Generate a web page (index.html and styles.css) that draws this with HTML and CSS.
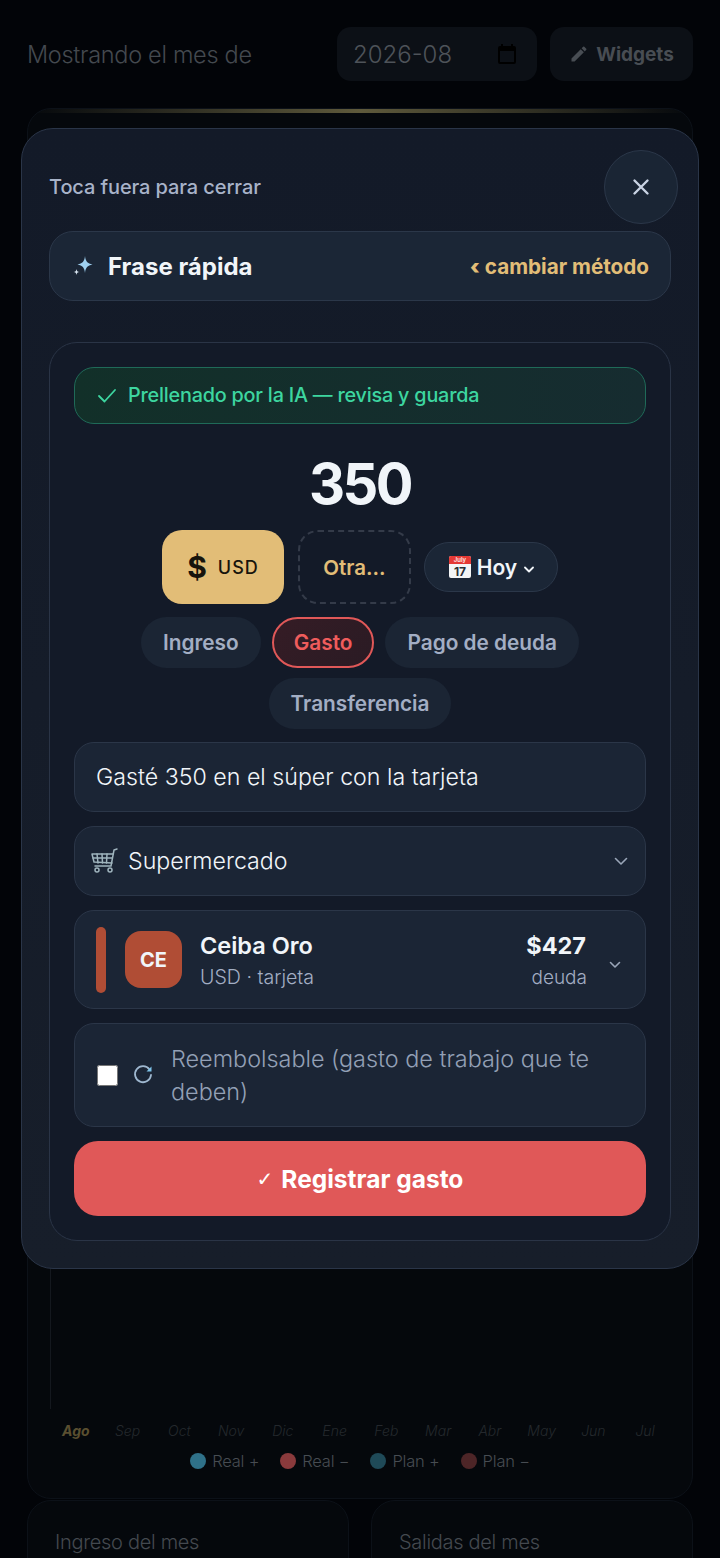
FILE: index.html
```html
<!DOCTYPE html>
<html lang="es">
<head>
    <meta charset="UTF-8">
    <meta name="viewport" content="width=device-width, initial-scale=1.0">
    <title>Registrar gasto</title>
    <link rel="stylesheet" href="styles.css">
</head>
<body>
<div class="page">
    <div class="top-bar">
        <span class="top-label">Mostrando el mes de</span>
        <div class="month-field">
            <span>2026-08</span>
            <svg width="24" height="24" viewBox="0 0 24 24" fill="#000"><path d="M19 4h-1V2h-2v2H8V2H6v2H5a2 2 0 0 0-2 2v14a2 2 0 0 0 2 2h14a2 2 0 0 0 2-2V6a2 2 0 0 0-2-2zm0 16H5V9h14v11z"/></svg>
        </div>
        <div class="widgets-btn">
            <svg width="20" height="20" viewBox="0 0 24 24" fill="#484d53"><path d="M3 17.25V21h3.75L17.81 9.94l-3.75-3.75L3 17.25zM20.71 7.04a1 1 0 0 0 0-1.41l-2.34-2.34a1 1 0 0 0-1.41 0l-1.83 1.83 3.75 3.75 1.83-1.83z"/></svg>
            <span>Widgets</span>
        </div>
    </div>

    <div class="chart-card">
        <div class="chart-accent"></div>
        <div class="chart-area"></div>
        <div class="months">
            <span class="current">Ago</span><span>Sep</span><span>Oct</span><span>Nov</span><span>Dic</span><span>Ene</span>
            <span>Feb</span><span>Mar</span><span>Abr</span><span>May</span><span>Jun</span><span>Jul</span>
        </div>
        <div class="legend">
            <div class="legend-item"><i class="dot dot-real-in"></i>Real +</div>
            <div class="legend-item"><i class="dot dot-real-out"></i>Real −</div>
            <div class="legend-item"><i class="dot dot-plan-in"></i>Plan +</div>
            <div class="legend-item"><i class="dot dot-plan-out"></i>Plan −</div>
        </div>
    </div>

    <div class="stats">
        <div class="stat-card">Ingreso del mes</div>
        <div class="stat-card">Salidas del mes</div>
    </div>
</div>

<!-- Modal -->
<div class="modal">
    <div class="modal-head">
        <span class="modal-hint">Toca fuera para cerrar</span>
        <div class="close-btn">
            <svg width="20" height="20" viewBox="0 0 20 20" fill="none" stroke="#c9d3e3" stroke-width="2.4" stroke-linecap="round"><path d="M3.5 3.5l13 13M16.5 3.5l-13 13"/></svg>
        </div>
    </div>

    <div class="method-row">
        <svg class="sparkle" width="22" height="22" viewBox="0 0 22 22"><path fill="#9fd0f0" d="M13 1c.6 5.500 2.400 7.500 7.500 8.500-5.100 1-6.900 3-7.500 8.500-.6-5.500-2.400-7.500-7.500-8.500 5.100-1 6.900-3 7.500-8.500z"/><path fill="#dbe7f3" d="M4.500 14c.3 2 .9 2.700 3 3-2.100.3-2.700 1-3 3-.3-2-.9-2.700-3-3 2.100-.3 2.700-1 3-3z"/></svg>
        <span class="method-name">Frase rápida</span>
        <span class="method-change"><b>‹</b> cambiar método</span>
    </div>

    <div class="form-card">
        <div class="ai-banner">
            <svg width="20" height="20" viewBox="0 0 20 20" fill="none" stroke="#3dd6a0" stroke-width="1.800" stroke-linecap="round" stroke-linejoin="round"><path d="M2 11l5.500 5.500L18 5"/></svg>
            <span>Prellenado por la IA — revisa y guarda</span>
        </div>

        <div class="amount">350</div>

        <div class="currency-row">
            <div class="currency active"><span class="currency-sign">$</span><span class="currency-code">USD</span></div>
            <div class="currency other">Otra...</div>
            <div class="date-pill">
                <svg width="24" height="24" viewBox="0 0 24 24"><rect x="1" y="1" width="22" height="22" rx="2" fill="#f4f5f6"/><path d="M1 3a2 2 0 0 1 2-2h18a2 2 0 0 1 2 2v6H1z" fill="#e53935"/><text x="12" y="7" font-size="6" text-anchor="middle" fill="#fde8e8" font-family="Inter, sans-serif">July</text><text x="12" y="20.500" font-size="12" font-weight="700" text-anchor="middle" fill="#2b2f36" font-family="Inter, sans-serif">17</text></svg>
                <span>Hoy</span>
                <svg class="date-chevron" width="10" height="7" viewBox="0 0 10 7" fill="none" stroke="#f1f5f9" stroke-width="1.800" stroke-linecap="round" stroke-linejoin="round"><path d="M1 1.500l4 4 4-4"/></svg>
            </div>
        </div>

        <div class="type-row">
            <div class="type-pill">Ingreso</div>
            <div class="type-pill selected">Gasto</div>
            <div class="type-pill">Pago de deuda</div>
            <div class="type-pill">Transferencia</div>
        </div>

        <div class="field field-text">Gasté 350 en el súper con la tarjeta</div>

        <div class="field field-select">
            <svg width="28" height="28" viewBox="0 0 28 28" fill="none" stroke="#9fb4bd" stroke-width="1.500" stroke-linecap="round" stroke-linejoin="round"><path d="M27 2l-3 1-3 16H5"/><path d="M23 7H2l2 8 18 1"/><path d="M7 7l1 9M12 7l.5 9M17 7l-.5 9M3 11h19"/><circle cx="7" cy="23" r="2"/><circle cx="20" cy="23" r="2"/></svg>
            <span class="select-value">Supermercado</span>
            <svg width="14" height="9" viewBox="0 0 14 9" fill="none" stroke="#9aa6b8" stroke-width="1.600" stroke-linecap="round" stroke-linejoin="round"><path d="M1.500 1.500L7 7l5.500-5.500"/></svg>
        </div>

        <div class="field field-account">
            <div class="account-bar"></div>
            <div class="account-badge">CE</div>
            <div class="account-info">
                <div class="account-name">Ceiba Oro</div>
                <div class="account-sub">USD · tarjeta</div>
            </div>
            <div class="account-balance">
                <div class="balance-value">$427</div>
                <div class="balance-label">deuda</div>
            </div>
            <svg class="account-chevron" width="12" height="8" viewBox="0 0 12 8" fill="none" stroke="#9aa6b8" stroke-width="1.600" stroke-linecap="round" stroke-linejoin="round"><path d="M1.500 1.500L6 6l4.500-4.500"/></svg>
        </div>

        <label class="field field-check">
            <input type="checkbox">
            <svg width="22" height="22" viewBox="0 0 22 22" fill="none"><path d="M17.500 5.500A8 8 0 1 0 19 11" stroke="#9fb8d0" stroke-width="1.800" stroke-linecap="round"/><path d="M19.500 2.500v5h-5z" fill="#7fc4ea"/></svg>
            <span>Reembolsable (gasto de trabajo que te deben)</span>
        </label>

        <div class="submit-btn"><span class="submit-check">✓</span> Registrar gasto</div>
    </div>
</div>
</body>
</html>
```

FILE: styles.css
```css
* {
    box-sizing: border-box;
}

body {
    margin: 0;
    height: 1558px;
    overflow: hidden;
    position: relative;
    background-color: #020408;
    font-family: Inter, "Noto Sans", sans-serif;
    color: #f1f5f9;
}

/* Page behind the modal, already dimmed */
.page {
    padding: 27px 27px 0;
}

.top-bar {
    display: flex;
    align-items: center;
    height: 54px;
}

.top-label {
    flex: 1;
    font-size: 23.5px;
    font-weight: 300;
    letter-spacing: -0.3px;
    color: #44494f;
}

.month-field {
    width: 200px;
    height: 54px;
    display: flex;
    align-items: center;
    justify-content: space-between;
    padding: 0 18px 0 16px;
    background-color: #0c1016;
    border-radius: 14px;
    font-size: 24px;
    font-weight: 300;
    color: #4e5359;
}

.widgets-btn {
    width: 143px;
    height: 54px;
    margin-left: 13px;
    display: flex;
    align-items: center;
    justify-content: center;
    gap: 7px;
    background-color: #0c1016;
    border-radius: 14px;
    font-size: 19px;
    font-weight: 700;
    color: #484d53;
}

.chart-card {
    height: 1391px;
    margin-top: 27px;
    display: flex;
    flex-direction: column;
    border: 1px solid #0c1118;
    border-radius: 24px;
    background-color: #05080c;
    overflow: hidden;
}

.chart-accent {
    height: 4px;
    background: linear-gradient(90deg, transparent, #5f5a3c 50%, transparent);
}

.chart-area {
    flex: 1;
    margin: 60px 0 13px 22px;
    border-left: 1px solid #14181e;
}

.months {
    display: grid;
    grid-template-columns: repeat(12, 1fr);
    padding: 0 21px 0 22px;
    text-align: center;
    font-size: 14px;
    font-style: italic;
    font-weight: 300;
    color: #24282d;
}

.months .current {
    font-weight: 700;
    color: #5a4f30;
}

.legend {
    display: flex;
    justify-content: center;
    gap: 21px;
    margin-top: 12px;
    margin-bottom: 27px;
    font-size: 16.5px;
    font-weight: 300;
    letter-spacing: -0.2px;
    color: #474c52;
}

.legend-item {
    display: flex;
    align-items: center;
    gap: 6px;
}

.dot {
    width: 16px;
    height: 16px;
    border-radius: 50%;
}

.dot-real-in { background-color: #2f7189; }
.dot-real-out { background-color: #8a3a3c; }
.dot-plan-in { background-color: #1f4a58; }
.dot-plan-out { background-color: #4d2527; }

.stats {
    display: flex;
    gap: 22px;
    margin-top: 1px;
}

.stat-card {
    flex: 1;
    height: 120px;
    padding: 29px 27px;
    border: 1px solid #0c1118;
    border-radius: 24px;
    background-color: #05080c;
    font-size: 20px;
    font-weight: 300;
    letter-spacing: -0.3px;
    color: #44494f;
}

/* Modal */
.modal {
    position: absolute;
    left: 21px;
    top: 128px;
    width: 678px;
    height: 1141px;
    padding: 21px 20px 0 27px;
    background: linear-gradient(180deg, #131a28, #171e2a);
    border: 1px solid #2a3548;
    border-radius: 32px;
}

.modal-head {
    display: flex;
    align-items: center;
    justify-content: space-between;
    height: 73px;
}

.modal-hint {
    font-size: 20px;
    font-weight: 500;
    letter-spacing: -0.1px;
    color: #a8b3c9;
}

.close-btn {
    width: 74px;
    height: 74px;
    display: flex;
    align-items: center;
    justify-content: center;
    background-color: #1a2534;
    border: 1px solid #2b3749;
    border-radius: 50%;
}

.method-row {
    width: 622px;
    height: 70px;
    margin-top: 8px;
    display: flex;
    align-items: center;
    padding: 0 21px 0 22px;
    background-color: #1b2636;
    border: 1px solid #2b3749;
    border-radius: 24px;
}

.sparkle {
    margin-right: 14px;
}

.method-name {
    flex: 1;
    font-size: 24px;
    font-weight: 700;
}

.method-change {
    font-size: 20.7px;
    font-weight: 700;
    color: #e2bd77;
}

.form-card {
    width: 622px;
    height: 899px;
    margin-top: 41px;
    padding: 24px 24px 0;
    display: flex;
    flex-direction: column;
    background-color: #131a28;
    border: 1px solid #2a3446;
    border-radius: 28px;
}

.ai-banner {
    height: 57px;
    flex: none;
    display: flex;
    align-items: center;
    gap: 11px;
    padding: 0 22px 1px;
    background: linear-gradient(90deg, #123029, #162c30);
    border: 1px solid #1f6a58;
    border-radius: 20px;
    font-size: 19.8px;
    font-weight: 500;
    letter-spacing: -0.2px;
    color: #3dd6a0;
}

.amount {
    height: 66px;
    margin-top: 27px;
    flex: none;
    text-align: center;
    font-size: 56px;
    line-height: 66px;
    font-weight: 700;
    letter-spacing: -2.5px;
}

.currency-row {
    margin-top: 13px;
    flex: none;
    display: flex;
    align-items: center;
    justify-content: center;
    gap: 14px;
    height: 74px;
}

.currency {
    height: 74px;
    display: flex;
    align-items: center;
    justify-content: center;
    border-radius: 20px;
}

.currency.active {
    width: 122px;
    gap: 11px;
    background-color: #e2bd77;
    color: #17140c;
}

.currency-sign {
    font-size: 30px;
    font-weight: 700;
}

.currency-code {
    font-size: 18px;
    font-weight: 500;
    letter-spacing: 1px;
}

.currency.other {
    width: 113px;
    border: 2px dashed #343b49;
    font-size: 20.5px;
    font-weight: 600;
    color: #e2bd77;
}

.date-pill {
    width: 134px;
    height: 50px;
    margin-left: -1px;
    display: flex;
    align-items: center;
    justify-content: center;
    gap: 5px;
    background-color: #1b2636;
    border: 1px solid #2b3749;
    border-radius: 25px;
    font-size: 21px;
    font-weight: 600;
}

.date-chevron {
    margin-left: 2px;
    margin-top: 4px;
}

.type-row {
    margin-top: 13px;
    flex: none;
    display: flex;
    flex-wrap: wrap;
    justify-content: center;
    gap: 10px 11px;
}

.type-pill {
    height: 51px;
    padding: 0 22px;
    display: flex;
    align-items: center;
    background-color: #1b2534;
    border-radius: 26px;
    font-size: 20.8px;
    font-weight: 600;
    color: #a3aec4;
}

.type-pill.selected {
    background: linear-gradient(135deg, #351c25, #2a1b24);
    border: 2px solid #e05858;
    padding: 0 20px;
    color: #ef5c5c;
}

.field {
    flex: none;
    display: flex;
    align-items: center;
    margin-top: 14px;
    background-color: #1b2535;
    border: 1px solid #2b3648;
    border-radius: 20px;
}

.field-text {
    height: 70px;
    margin-top: 13px;
    padding: 0 21px;
    font-size: 23.2px;
    font-weight: 300;
}

.field-select {
    height: 70px;
    padding: 0 17px 0 15px;
    gap: 10px;
    font-size: 23.2px;
    font-weight: 300;
}

.select-value {
    flex: 1;
}

.field-account {
    height: 99px;
    padding: 0 24px 0 21px;
}

.account-bar {
    width: 10px;
    height: 66px;
    background-color: #b04d35;
    border-radius: 5px;
}

.account-badge {
    width: 57px;
    height: 57px;
    margin-left: 19px;
    display: flex;
    align-items: center;
    justify-content: center;
    background-color: #b04d35;
    border-radius: 16px;
    font-size: 20px;
    font-weight: 700;
}

.account-info {
    flex: 1;
    margin-left: 18px;
}

.account-name {
    font-size: 23.5px;
    font-weight: 600;
}

.account-sub {
    margin-top: 5px;
    font-size: 19.6px;
    font-weight: 300;
    color: #a3aec4;
}

.account-balance {
    text-align: right;
}

.balance-value {
    font-size: 23.5px;
    font-weight: 700;
    margin-right: 1px;
}

.balance-label {
    margin-top: 6px;
    font-size: 19px;
    font-weight: 300;
    color: #a3aec4;
}

.account-chevron {
    margin-left: 22px;
    margin-top: 10px;
}

.field-check {
    height: 104px;
    padding: 0 44px 0 22px;
    gap: 14px;
    font-size: 23.4px;
    line-height: 33px;
    font-weight: 300;
    color: #93a0b6;
}

.field-check input {
    width: 21px;
    height: 21px;
    margin: 0;
    flex: none;
}

.field-check svg {
    flex: none;
}

.field-check span {
    margin-left: 3px;
}

.submit-btn {
    height: 75px;
    margin-top: 14px;
    flex: none;
    display: flex;
    align-items: center;
    justify-content: center;
    gap: 8px;
    background-color: #e05858;
    border-radius: 24px;
    font-size: 24.5px;
    font-weight: 700;
    color: #fff;
}

.submit-check {
    font-family: "DejaVu Sans", sans-serif;
    font-size: 20px;
    font-weight: 400;
}
```
